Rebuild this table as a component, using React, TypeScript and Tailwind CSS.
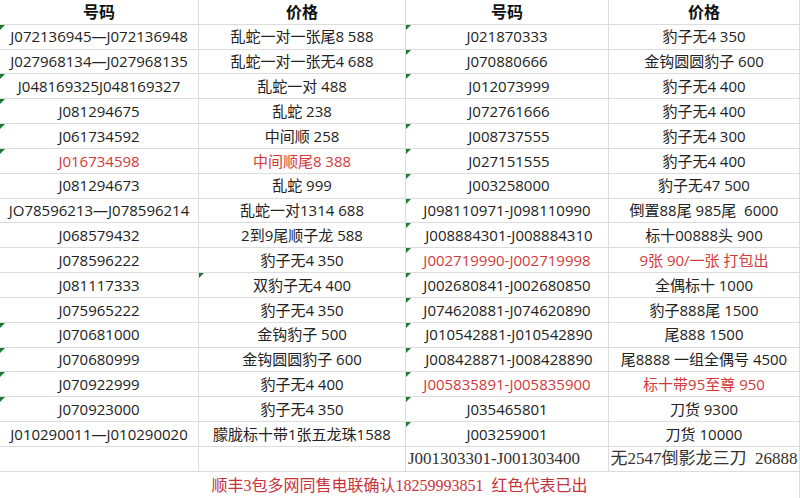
import React from 'react';

type Row = {
  a: string;
  b: string;
  c: string;
  d: string;
  aTri?: boolean;
  bTri?: boolean;
  cTri?: boolean;
  aRed?: boolean;
  cRed?: boolean;
  serif?: boolean;
};

const rows: Row[] = [
  { a: 'J072136945—J072136948', b: '乱蛇一对一张尾8 588', c: 'J021870333', d: '豹子无4 350', aTri: true, cTri: true },
  { a: 'J027968134—J027968135', b: '乱蛇一对一张无4 688', c: 'J070880666', d: '金钩圆圆豹子 600', cTri: true },
  { a: 'J048169325J048169327', b: '乱蛇一对 488', c: ' J012073999', d: '豹子无4 400', aTri: true, cTri: true },
  { a: 'J081294675', b: '乱蛇 238', c: ' J072761666', d: '豹子无4 400', aTri: true },
  { a: 'J061734592', b: '中间顺 258', c: ' J008737555', d: '豹子无4 300', aTri: true, cTri: true },
  { a: 'J016734598', b: '中间顺尾8 388', c: ' J027151555', d: '豹子无4 400', aTri: true, cTri: true, aRed: true },
  { a: 'J081294673', b: '乱蛇 999', c: ' J003258000', d: '豹子无47 500', cTri: true },
  { a: 'JO78596213—J078596214', b: '乱蛇一对1314 688', c: 'J098110971-J098110990', d: '倒置88尾 985尾  6000', cTri: true },
  { a: 'J068579432', b: '2到9尾顺子龙 588', c: ' J008884301-J008884310', d: '标十00888头 900', cTri: true },
  { a: 'J078596222', b: '豹子无4 350', c: 'J002719990-J002719998', d: '9张 90/一张 打包出', cTri: true, cRed: true },
  { a: 'J081117333', b: '双豹子无4 400', c: 'J002680841-J002680850', d: '全偶标十 1000', bTri: true, cTri: true },
  { a: 'J075965222', b: '豹子无4 350', c: 'J074620881-J074620890', d: '豹子888尾 1500', cTri: true },
  { a: 'J070681000', b: '金钩豹子 500', c: ' J010542881-J010542890', d: '尾888 1500', aTri: true, cTri: true },
  { a: 'J070680999', b: '金钩圆圆豹子 600', c: ' J008428871-J008428890', d: '尾8888 一组全偶号 4500', aTri: true, cTri: true },
  { a: 'J070922999', b: '豹子无4 400', c: 'J005835891-J005835900', d: '标十带95至尊 950', aTri: true, cTri: true, cRed: true },
  { a: 'J070923000', b: '豹子无4 350', c: 'J035465801', d: '刀货 9300', aTri: true, cTri: true },
  { a: 'J010290011—J010290020', b: '朦胧标十带1张五龙珠1588', c: 'J003259001', d: '刀货 10000', cTri: true },
  { a: '', b: '', c: 'J001303301-J001303400', d: '无2547倒影龙三刀  26888', serif: true },
];

const sans = { fontFamily: '"Open Sans", "Noto Sans CJK SC", sans-serif' };
const serifFont = { fontFamily: '"Liberation Serif", "Noto Sans CJK SC", serif' };

// excel "number stored as text" marker
const Tri = () => (
  <svg className="absolute left-0 top-0" width="5" height="5" viewBox="0 0 5 5">
    <polygon points="0,0 5,0 0,5" fill="#1d7a35" />
  </svg>
);

const Cell: React.FC<{ text: string; tri?: boolean; red?: boolean; serif?: boolean; left?: boolean }> = ({
  text,
  tri,
  red,
  serif,
  left,
}) => (
  <div
    className={`relative flex items-center ${left ? 'justify-start pl-[2px]' : 'justify-center'} whitespace-pre border-r border-b border-[#dcdcdc] ${
      red ? 'text-[#d23a3a]' : serif ? 'text-[#333]' : 'text-[#222]'
    } ${serif ? 'text-[17px]' : 'text-[15px]'}`}
    style={serif ? serifFont : undefined}
  >
    {tri && <Tri />}
    {text}
  </div>
);

export default function App() {
  return (
    <div className="h-[498px] w-[800px] overflow-hidden bg-white" style={sans}>
      <div className="grid h-full grid-cols-[199px_207px_203px_191px] grid-rows-[repeat(19,24.84px)_1fr]">
        {['号码', '价格', '号码', '价格'].map((h, i) => (
          <div
            key={i}
            className="flex items-center justify-center border-r border-b border-[#dcdcdc] text-[16px] font-bold text-[#111]"
          >
            {h}
          </div>
        ))}
        {rows.map((r, i) => (
          <React.Fragment key={i}>
            <Cell text={r.a} tri={r.aTri} red={r.aRed} />
            <Cell text={r.b} tri={r.bTri} red={r.aRed} />
            <Cell text={r.c} tri={r.cTri} red={r.cRed} serif={r.serif} left={r.serif} />
            <Cell text={r.d} red={r.cRed} serif={r.serif} />
          </React.Fragment>
        ))}
        <div
          className="col-span-4 flex items-center justify-center whitespace-pre border-r border-b border-[#dcdcdc] pt-[2px] text-[16px] text-[#c8323a]"
          style={serifFont}
        >
          {'顺丰3包多网同售电联确认18259993851  红色代表已出'}
        </div>
      </div>
    </div>
  );
}
